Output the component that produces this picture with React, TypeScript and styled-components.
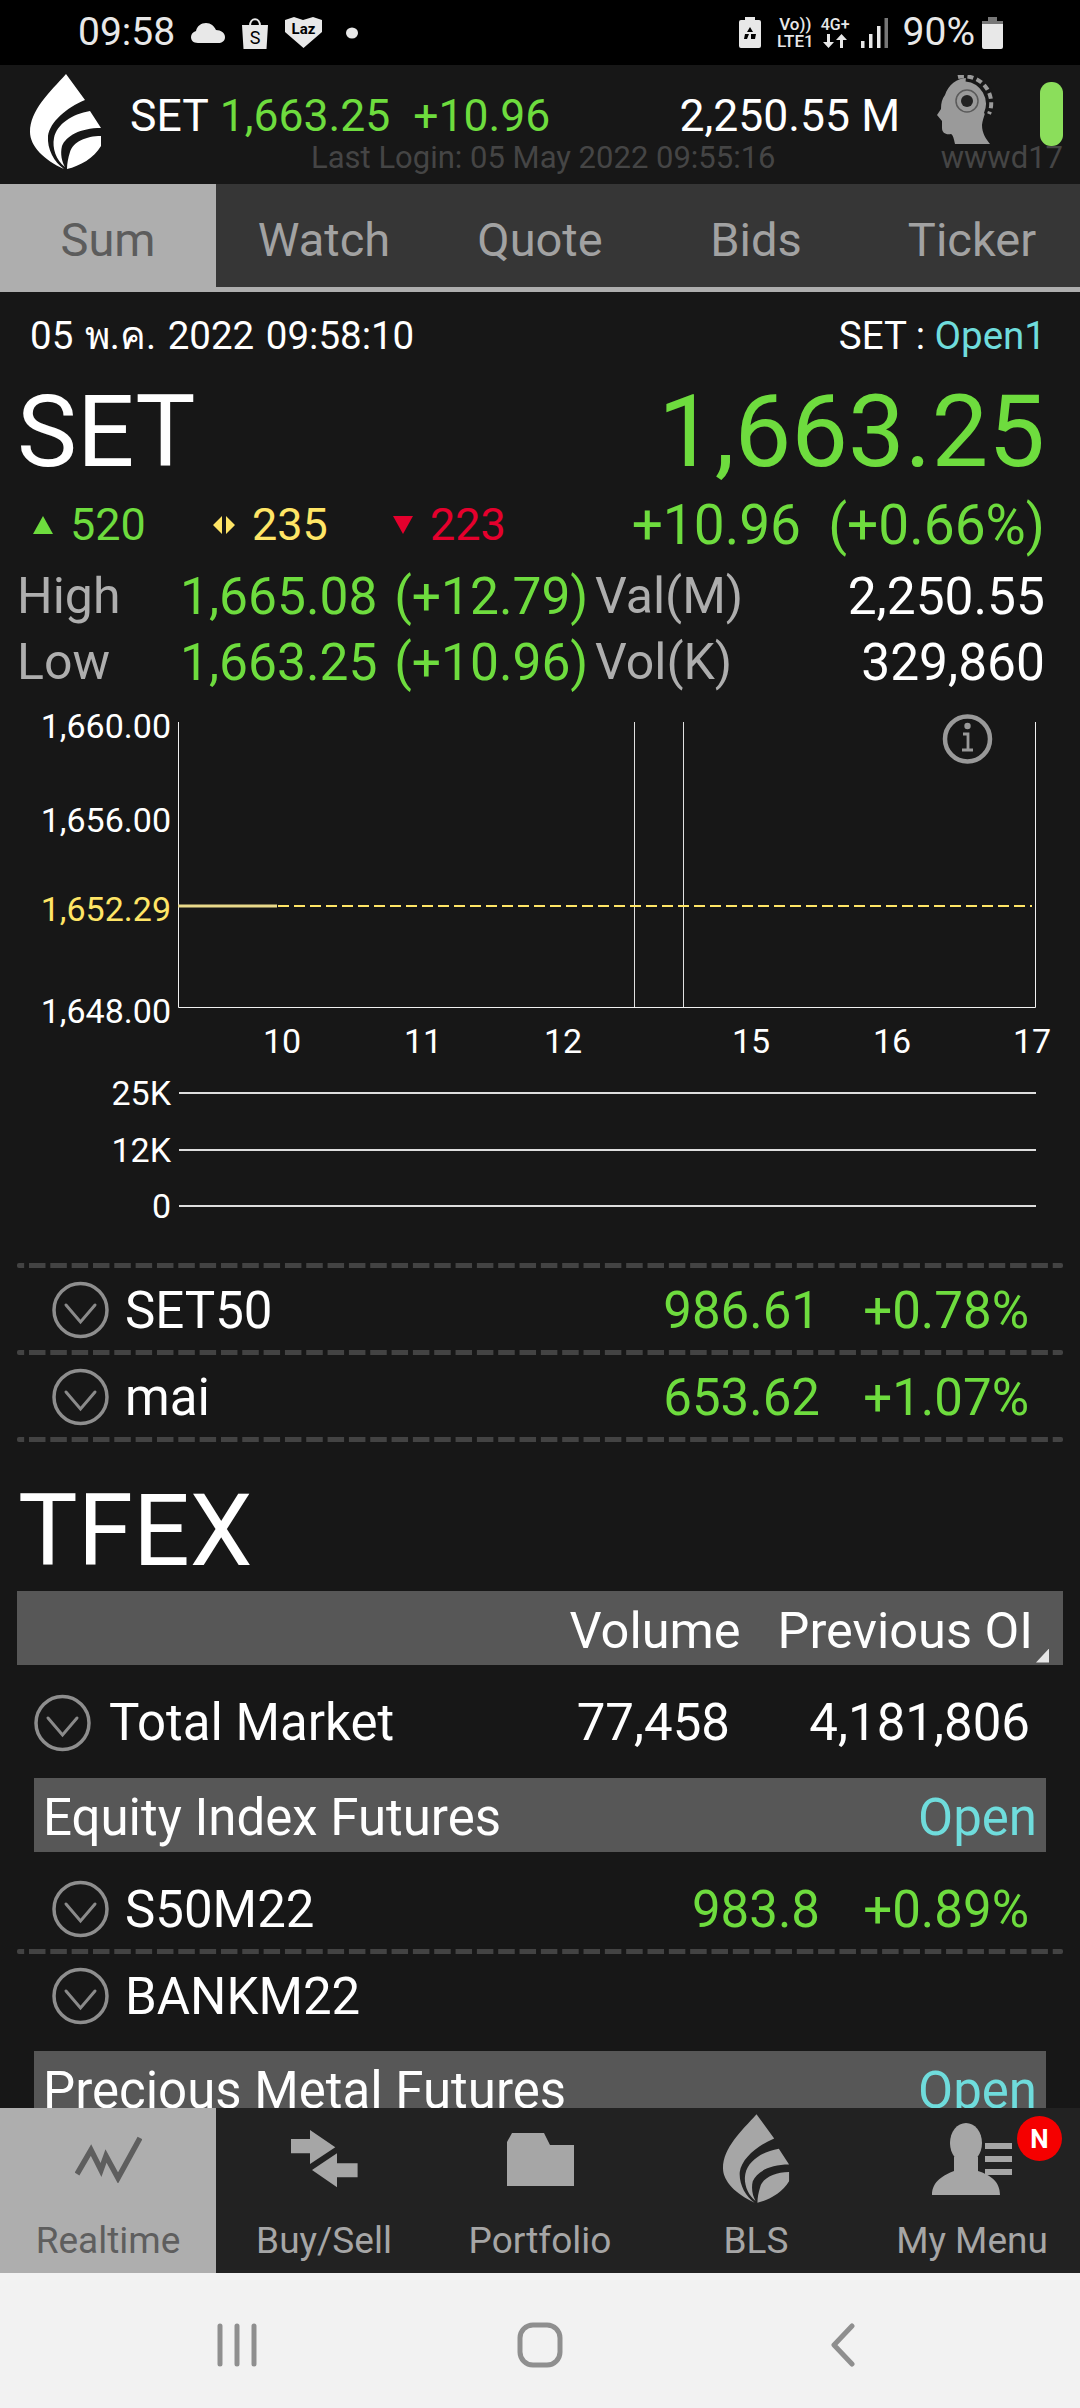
import React from 'react';
import styled, { createGlobalStyle } from 'styled-components';

// --- Palette ---

const GREEN = '#6edc3e';
const YELLOW = '#ffe566';
const RED = '#e5002d';
const CYAN = '#6fdcdc';
const PAGE = '#171717';

// --- Styled Components ---

const GlobalStyle = createGlobalStyle`
  html, body {
    margin: 0;
    padding: 0;
    background: ${PAGE};
  }
  * {
    box-sizing: border-box;
  }
`;

const Screen = styled.div`
  width: 1080px;
  height: 2408px;
  display: flex;
  flex-direction: column;
  overflow: hidden;
  background: ${PAGE};
  color: #ffffff;
  font-family: Roboto, "Noto Sans", sans-serif;
`;

const StatusBar = styled.div`
  height: 65px;
  flex: none;
  background: #000000;
  display: flex;
  align-items: center;
  padding: 0 77px 0 78px;
  color: #e8e8e8;
`;

const StatusText = styled.span`
  font-size: 39px;
  line-height: 67px;
`;

const StatusGroup = styled.div<{ $gap: number; $left?: number }>`
  display: flex;
  align-items: center;
  gap: ${(p) => p.$gap}px;
  margin-left: ${(p) => p.$left ?? 0}px;
`;

const StatusSpacer = styled.div`
  flex: 1;
`;

const NetworkStack = styled.div<{ $size: number; $left?: number }>`
  display: flex;
  flex-direction: column;
  align-items: center;
  gap: 1px;
  margin-left: ${(p) => p.$left ?? 0}px;
  font-size: ${(p) => p.$size}px;
  line-height: 16px;
  font-weight: 500;
  color: #e8e8e8;
`;

const Header = styled.header`
  height: 119px;
  flex: none;
  display: flex;
  background: ${PAGE};
  padding-left: 30px;
`;

const LogoSlot = styled.div`
  width: 72px;
  flex: none;
  padding-top: 9px;
`;

const QuoteColumn = styled.div`
  width: 806px;
  flex: none;
  margin-left: 28px;
  padding-top: 21px;
`;

const QuoteLine = styled.div`
  height: 60px;
  display: flex;
  align-items: center;
  justify-content: space-between;
  padding-right: 36px;
  font-size: 44.5px;
`;

const QuoteGroup = styled.div`
  display: flex;
  gap: 11px;
`;

const ColorText = styled.span<{ $color?: string; $left?: number }>`
  color: ${(p) => p.$color ?? 'inherit'};
  margin-left: ${(p) => p.$left ?? 0}px;
  white-space: nowrap;
`;

const LastLogin = styled.div`
  height: 26px;
  line-height: 26px;
  margin-top: -1px;
  padding-left: 181px;
  font-size: 31px;
  color: #454545;
  white-space: nowrap;
`;

const AccountColumn = styled.div`
  flex: none;
  width: 127px;
  display: flex;
  flex-direction: column;
  padding-top: 10px;
`;

const AccountIcons = styled.div`
  height: 70px;
  display: flex;
  justify-content: space-between;
`;

const StatusPill = styled.div`
  width: 23px;
  height: 64px;
  margin-top: 7px;
  border-radius: 11px;
  background: #8bde5b;
`;

const UserName = styled.div`
  height: 26px;
  line-height: 26px;
  text-align: right;
  font-size: 31px;
  color: #454545;
`;

const TabBar = styled.nav`
  height: 108px;
  flex: none;
  display: flex;
  background: #363636;
  border-bottom: 5px solid #aeaeae;
`;

const Tab = styled.div<{ $active?: boolean }>`
  width: 216px;
  display: flex;
  align-items: center;
  justify-content: center;
  padding-top: 8px;
  font-size: 47px;
  background: ${(p) => (p.$active ? '#aeaeae' : 'transparent')};
  color: ${(p) => (p.$active ? '#5c5c5c' : '#a2a2a2')};
`;

const Content = styled.main`
  flex: 1;
  min-height: 0;
  overflow: hidden;
`;

const DateRow = styled.div`
  height: 86px;
  display: flex;
  align-items: center;
  justify-content: space-between;
  padding: 0 34px 0 30px;
  font-size: 38.5px;
`;

const DateText = styled.span`
  word-spacing: 2px;
`;

const MarketLabel = styled.div`
  white-space: pre;
`;

const HeroRow = styled.div`
  height: 106px;
  display: flex;
  align-items: center;
  justify-content: space-between;
  padding: 0 35px 0 17px;
  font-size: 101px;
`;

const BreadthRow = styled.div`
  height: 79px;
  display: flex;
  align-items: center;
  justify-content: space-between;
  padding: 2px 35px 0 33px;
`;

const BreadthGroup = styled.div`
  display: flex;
  align-items: center;
`;

const BreadthItem = styled.div<{ $width: number; $color: string }>`
  width: ${(p) => p.$width}px;
  display: flex;
  align-items: center;
  gap: 17px;
  font-size: 45px;
  color: ${(p) => p.$color};
`;

const DayChange = styled.div`
  font-size: 55px;
  color: ${GREEN};
  white-space: pre;
`;

const RangeRow = styled.div`
  height: 66px;
  display: flex;
  align-items: center;
  padding: 0 35px 0 17px;
  font-size: 51.5px;
  white-space: pre;
`;

const RangeLabel = styled.span<{ $width: number }>`
  width: ${(p) => p.$width}px;
  flex: none;
  font-size: 50px;
  color: #aeaeae;
`;

const RangeValue = styled.span`
  width: 415px;
  flex: none;
  word-spacing: 4px;
  color: ${GREEN};
`;

const RangeTotal = styled.span`
  flex: 1;
  text-align: right;
`;

const PriceChart = styled.div`
  position: relative;
  height: 370px;
  padding: 27px 0 0 178px;
`;

const AxisLabel = styled.span<{ $y: number; $color?: string }>`
  position: absolute;
  right: 909px;
  top: ${(p) => p.$y - 20}px;
  font-size: 34px;
  line-height: 40px;
  color: ${(p) => p.$color ?? '#ffffff'};
`;

const TimeLabel = styled.span<{ $x: number }>`
  position: absolute;
  top: 326px;
  left: ${(p) => p.$x - 30}px;
  width: 60px;
  text-align: center;
  font-size: 34px;
  line-height: 40px;
`;

const VolumeChart = styled.section`
  margin-bottom: 28px;
`;

const VolumeRow = styled.div`
  height: 56.5px;
  display: flex;
  align-items: center;
  gap: 8px;
  font-size: 34px;
`;

const VolumeLabel = styled.span`
  width: 171px;
  text-align: right;
`;

const VolumeLine = styled.div`
  width: 857px;
  height: 2px;
  background: #dedede;
`;

const Divider = styled.div`
  height: 5px;
  margin: 0 17px;
  background-image: linear-gradient(90deg, #434343 16px, transparent 16px);
  background-size: 21.33px 5px;
  background-position: 12px 0;
  border-radius: 2px;
`;

const SymbolRow = styled.div<{ $top?: number }>`
  height: 82px;
  margin-top: ${(p) => p.$top ?? 0}px;
  display: flex;
  align-items: center;
  padding: 3px 51px 0 52px;
  font-size: 51px;
`;

const SymbolName = styled.span`
  margin-left: 16px;
  flex: 1;
`;

const TotalName = styled(SymbolName)`
  margin-left: 18px;
`;

const PriceCell = styled.span`
  color: ${GREEN};
`;

const PercentCell = styled.span`
  width: 209px;
  text-align: right;
  color: ${GREEN};
`;

const SectionTitle = styled.h2`
  margin: 28px 0 0;
  height: 121px;
  line-height: 121px;
  padding-left: 18px;
  font-size: 100px;
  font-weight: 400;
`;

const TableHead = styled.div`
  position: relative;
  height: 74px;
  margin: 0 17px;
  display: flex;
  align-items: center;
  justify-content: flex-end;
  padding: 6px 30px 0 0;
  background: #575757;
  font-size: 50.5px;
`;

const CornerMark = styled.span`
  position: absolute;
  right: 14px;
  bottom: 2px;
  width: 13px;
  height: 14px;
  background: #e6e6e6;
  clip-path: polygon(100% 0, 100% 100%, 0 100%);
`;

const HeadVolume = styled.span`
  margin-right: 37px;
`;

const TotalRow = styled.div`
  height: 113px;
  display: flex;
  align-items: center;
  padding: 3px 50px 0 34px;
  font-size: 51px;
`;

const TotalCell = styled.span`
  width: 300px;
  text-align: right;
`;

const GroupBar = styled.div<{ $top?: number }>`
  height: 74px;
  flex: none;
  margin: ${(p) => p.$top ?? 0}px 34px 0;
  display: flex;
  align-items: center;
  justify-content: space-between;
  padding: 5px 9px 0 9px;
  background: #575757;
  font-size: 51px;
`;

const GroupState = styled.span`
  color: ${CYAN};
`;

const BottomNav = styled.nav`
  height: 165px;
  flex: none;
  display: flex;
  background: #222222;
`;

const NavItem = styled.div<{ $active?: boolean }>`
  position: relative;
  width: 216px;
  display: flex;
  flex-direction: column;
  align-items: center;
  background: ${(p) => (p.$active ? '#aeaeae' : 'transparent')};
  color: ${(p) => (p.$active ? '#5e5e5e' : '#a6a6a6')};
`;

const NavIconSlot = styled.div`
  height: 102px;
  display: flex;
  align-items: center;
  justify-content: center;
`;

const NavLabel = styled.span`
  font-size: 37px;
  line-height: 54px;
  margin-top: 4px;
`;

const NewBadge = styled.span`
  position: absolute;
  top: 8px;
  left: 153px;
  width: 45px;
  height: 45px;
  border-radius: 50%;
  background: #f50000;
  color: #ffffff;
  display: flex;
  align-items: center;
  justify-content: center;
  font-size: 26px;
  font-weight: 700;
`;

const SystemBar = styled.div`
  height: 135px;
  flex: none;
  background: #f2f2f2;
  display: grid;
  grid-template-columns: repeat(3, 303px);
  justify-content: center;
  align-items: center;
  justify-items: center;
  padding-top: 9px;
`;

const PlotSvg = styled.svg`
  display: block;
  overflow: visible;
`;

// --- Icons ---

const Flame = ({ fill, width, height }: { fill: string; width: number; height: number }) => (
  <svg width={width} height={height} viewBox="0 0 72 96" fill={fill}>
    <path d="M36 0 L55 26 C36 34 20 48 18 62 C17 75 24 88 34 95 C14 86 0 72 0 58 C0 36 20 18 36 0 Z" />
    <path d="M60 37 L71 54 C50 54 36 62 32 72 C30 80 32 88 35 93 C26 86 22 74 24 64 C27 50 42 40 60 37 Z" />
    <path d="M71 62 C56 62 43 68 40 78 C38 84 37 90 37 95 C50 92 64 84 71 72 Z" />
  </svg>
);

const Chevron = () => (
  <svg width="57" height="58" viewBox="0 0 57 58" fill="none">
    <circle cx="28.5" cy="29" r="26.5" stroke="#8e8e8e" strokeWidth="3.5" />
    <path d="M14 24 L28.5 41 L43 24" stroke="#8a8a8a" strokeWidth="3" strokeLinecap="round" />
  </svg>
);

const HeadIcon = () => (
  <svg width="60" height="70" viewBox="0 0 60 70">
    <path
      d="M9 20 C12 10 21 3 31 3 C42 3 51 12 51 26 C51 36 47 42 46 50 C46 58 50 64 54 69 L19 69 C18 64 17 60 15 59 C10 60 6 58 6 53 L6 46 L1 40 L5 34 C5 28 6 24 9 20 Z"
      fill="#9a9a9a"
    />
    <path d="M30 2 A27 27 0 0 1 52 40" fill="none" stroke={PAGE} strokeWidth="9" />
    <path
      d="M22 2 A27 27 0 0 1 53 39"
      fill="none"
      stroke="#9a9a9a"
      strokeWidth="4"
      strokeDasharray="6 3.5"
    />
    <circle cx="31" cy="26" r="11" fill="none" stroke="#5a5a5a" strokeWidth="1.5" />
    <circle cx="31" cy="26" r="6" fill="#222222" />
  </svg>
);

const RealtimeIcon = () => (
  <svg width="67" height="48" viewBox="0 0 67 48" fill="none">
    <path d="M2 39 L16 15 L26 35 L31 21 L43 43 L65 3" stroke="currentColor" strokeWidth="5.5" />
  </svg>
);

const TradeIcon = () => (
  <svg width="67" height="58" viewBox="0 0 67 58" fill="currentColor">
    <path d="M0 9 H19 V0 L44.3 17.3 L19 34 V23.3 H0 Z" />
    <path d="M66.6 33.3 H46 V23.3 L21 40 L46 57.3 V47.3 H66.6 Z" />
  </svg>
);

const FolderIcon = () => (
  <svg width="67" height="53" viewBox="0 0 67 53" fill="currentColor">
    <path d="M0 53 V9 L5 0 H37 L43 12 H67 V53 Z" />
  </svg>
);

const PersonIcon = () => (
  <svg width="80" height="72" viewBox="0 0 80 72" fill="currentColor">
    <ellipse cx="34" cy="20" rx="16" ry="20" />
    <path d="M0 72 C0 58 12 52 22 48 L22 34 H46 V48 C58 52 68 58 68 72 Z" />
    <rect x="53" y="20" width="27" height="6" />
    <rect x="53" y="33" width="27" height="6" />
    <rect x="53" y="46" width="27" height="6" />
  </svg>
);

const PriceChartPlot = () => (
  <PlotSvg width="860" height="288" viewBox="0 0 860 288" fill="none">
    <path d="M0.5 0 V285.5 H857.5 V0" stroke="#f0f0f0" strokeWidth="1" />
    <path d="M456.5 0 V285 M505.5 0 V285" stroke="#e0e0e0" strokeWidth="1" />
    <path d="M100 184 H854" stroke={YELLOW} strokeWidth="2" strokeDasharray="11 5" />
    <path d="M0 184 H99" stroke="#e9d98a" strokeWidth="3" />
    <circle cx="789.5" cy="17" r="22.5" stroke="#999999" strokeWidth="4.5" />
    <circle cx="789.5" cy="4" r="3.2" fill="#999999" />
    <path d="M785 12 H790 V27 M784 28 H795" stroke="#999999" strokeWidth="2.8" />
  </PlotSvg>
);

// --- Data ---

const TABS = ['Sum', 'Watch', 'Quote', 'Bids', 'Ticker'];
const AXIS = [
  { y: 31, text: '1,660.00' },
  { y: 125, text: '1,656.00' },
  { y: 214, text: '1,652.29', color: YELLOW },
  { y: 316, text: '1,648.00' },
];
const TIMES = [
  { x: 282, text: '10' },
  { x: 423, text: '11' },
  { x: 563, text: '12' },
  { x: 751, text: '15' },
  { x: 892, text: '16' },
  { x: 1032, text: '17' },
];

// --- Component ---

const App = () => {
  return (
    <Screen>
      <GlobalStyle />

      <StatusBar>
        <StatusText>09:58</StatusText>
        <StatusGroup $gap={16} $left={16}>
          <svg width="34" height="20" viewBox="0 0 34 20" fill="#e8e8e8">
            <path d="M7 20 C2 20 0 17 0 14 C0 11 2 9 5 8 C6 3 10 0 15 0 C20 0 23 3 25 7 C30 7 34 10 34 14 C34 18 31 20 27 20 Z" />
          </svg>
          <svg width="28" height="32" viewBox="0 0 28 32">
            <path d="M1 8 H27 L25.5 32 H2.5 Z" fill="#e8e8e8" />
            <path d="M9 9 C9 0 19 0 19 9" fill="none" stroke="#e8e8e8" strokeWidth="2" />
            <text x="14" y="27" textAnchor="middle" fontSize="18" fill="#000000" fontFamily="Roboto">S</text>
          </svg>
          <svg width="37" height="31" viewBox="0 0 37 31">
            <path d="M0 3 L9 0 L18 3 L28 0 L37 3 V15 L18.5 31 L0 15 Z" fill="#e8e8e8" />
            <text x="18.5" y="17" textAnchor="middle" fontSize="15" fontWeight="700" fill="#000000" fontFamily="Roboto">Laz</text>
          </svg>
          <svg width="14" height="12" viewBox="0 0 14 12" style={{ marginLeft: 7 }}>
            <ellipse cx="7" cy="6" rx="6" ry="5.5" fill="#e8e8e8" />
          </svg>
        </StatusGroup>
        <StatusSpacer />
        <StatusGroup $gap={15}>
          <svg width="22" height="31" viewBox="0 0 22 31">
            <path d="M6 0 H16 V3 H20 Q22 3 22 5 V29 Q22 31 20 31 H2 Q0 31 0 29 V5 Q0 3 2 3 H6 Z" fill="#e8e8e8" />
            <path d="M11 10 L14 15 H8 Z M6 17 H10 L8 22 H5 Z M12 17 H17 L16 22 H12 Z" fill="#000000" />
          </svg>
          <NetworkStack $size={17} $left={1}>
            <span>Vo))</span>
            <span>LTE1</span>
          </NetworkStack>
          <NetworkStack $size={16} $left={-8}>
            <span>4G+</span>
            <svg width="26" height="14" viewBox="0 0 26 14" fill="#e8e8e8">
              <path d="M5 0 H8 V8 H12 L6.5 14 L1 8 H5 Z M18 14 H21 V6 H25 L19.5 0 L14 6 H18 Z" />
            </svg>
          </NetworkStack>
          <svg width="27" height="30" viewBox="0 0 27 30" style={{ marginLeft: -4 }}>
            <rect x="0" y="23" width="3.5" height="7" fill="#e8e8e8" />
            <rect x="8" y="16" width="3.5" height="14" fill="#e8e8e8" />
            <rect x="16" y="8" width="3.5" height="22" fill="#e8e8e8" />
            <rect x="23.5" y="0" width="3.5" height="30" fill="#777777" />
          </svg>
          <StatusText>90%</StatusText>
          <svg width="21" height="32" viewBox="0 0 21 32" style={{ marginLeft: -8 }}>
            <rect x="6" y="0" width="9" height="4" fill="#777777" />
            <rect x="0" y="4" width="21" height="4" fill="#777777" />
            <path d="M0 7 H21 V30 Q21 32 19 32 H2 Q0 32 0 30 Z" fill="#e8e8e8" />
          </svg>
        </StatusGroup>
      </StatusBar>

      <Header>
        <LogoSlot>
          <Flame fill="#ffffff" width={72} height={96} />
        </LogoSlot>
        <QuoteColumn>
          <QuoteLine>
            <QuoteGroup>
              <span>SET</span>
              <ColorText $color={GREEN}>1,663.25</ColorText>
              <ColorText $color={GREEN} $left={12}>+10.96</ColorText>
            </QuoteGroup>
            <span>2,250.55 M</span>
          </QuoteLine>
          <LastLogin>Last Login: 05 May 2022 09:55:16</LastLogin>
        </QuoteColumn>
        <AccountColumn>
          <AccountIcons>
            <HeadIcon />
            <StatusPill />
          </AccountIcons>
          <UserName>wwwd17</UserName>
        </AccountColumn>
      </Header>

      <TabBar>
        {TABS.map((tab, i) => (
          <Tab key={tab} $active={i === 0}>{tab}</Tab>
        ))}
      </TabBar>

      <Content>
        <DateRow>
          <DateText>05 พ.ค. 2022 09:58:10</DateText>
          <MarketLabel>SET : <ColorText $color={CYAN}>Open1</ColorText></MarketLabel>
        </DateRow>

        <HeroRow>
          <span>SET</span>
          <ColorText $color={GREEN}>1,663.25</ColorText>
        </HeroRow>

        <BreadthRow>
          <BreadthGroup>
            <BreadthItem $width={180} $color={GREEN}>
              <svg width="20" height="18" viewBox="0 0 20 18" fill={GREEN}><path d="M10 0 L20 18 H0 Z" /></svg>
              520
            </BreadthItem>
            <BreadthItem $width={180} $color={YELLOW}>
              <svg width="22" height="18" viewBox="0 0 22 18" fill={YELLOW}><path d="M9 0 V18 L0 9 Z M13 0 L22 9 L13 18 Z" /></svg>
              235
            </BreadthItem>
            <BreadthItem $width={120} $color={RED}>
              <svg width="20" height="18" viewBox="0 0 20 18" fill={RED}><path d="M0 0 H20 L10 18 Z" /></svg>
              223
            </BreadthItem>
          </BreadthGroup>
          <DayChange>+10.96  (+0.66%)</DayChange>
        </BreadthRow>

        <RangeRow>
          <RangeLabel $width={163}>High</RangeLabel>
          <RangeValue>1,665.08 (+12.79)</RangeValue>
          <RangeLabel $width={200}>Val(M)</RangeLabel>
          <RangeTotal>2,250.55</RangeTotal>
        </RangeRow>
        <RangeRow>
          <RangeLabel $width={163}>Low</RangeLabel>
          <RangeValue>1,663.25 (+10.96)</RangeValue>
          <RangeLabel $width={200}>Vol(K)</RangeLabel>
          <RangeTotal>329,860</RangeTotal>
        </RangeRow>

        <PriceChart>
          <PriceChartPlot />
          {AXIS.map((a) => (
            <AxisLabel key={a.text} $y={a.y} $color={a.color}>{a.text}</AxisLabel>
          ))}
          {TIMES.map((t) => (
            <TimeLabel key={t.text} $x={t.x}>{t.text}</TimeLabel>
          ))}
        </PriceChart>

        <VolumeChart>
          <VolumeRow><VolumeLabel>25K</VolumeLabel><VolumeLine /></VolumeRow>
          <VolumeRow><VolumeLabel>12K</VolumeLabel><VolumeLine /></VolumeRow>
          <VolumeRow><VolumeLabel>0</VolumeLabel><VolumeLine /></VolumeRow>
        </VolumeChart>

        <Divider />
        <SymbolRow>
          <Chevron />
          <SymbolName>SET50</SymbolName>
          <PriceCell>986.61</PriceCell>
          <PercentCell>+0.78%</PercentCell>
        </SymbolRow>
        <Divider />
        <SymbolRow>
          <Chevron />
          <SymbolName>mai</SymbolName>
          <PriceCell>653.62</PriceCell>
          <PercentCell>+1.07%</PercentCell>
        </SymbolRow>
        <Divider />

        <SectionTitle>TFEX</SectionTitle>
        <TableHead>
          <HeadVolume>Volume</HeadVolume>
          <span>Previous OI</span>
          <CornerMark />
        </TableHead>
        <TotalRow>
          <Chevron />
          <TotalName>Total Market</TotalName>
          <span>77,458</span>
          <TotalCell>4,181,806</TotalCell>
        </TotalRow>

        <GroupBar>
          <span>Equity Index Futures</span>
          <GroupState>Open</GroupState>
        </GroupBar>
        <SymbolRow $top={15}>
          <Chevron />
          <SymbolName>S50M22</SymbolName>
          <PriceCell>983.8</PriceCell>
          <PercentCell>+0.89%</PercentCell>
        </SymbolRow>
        <Divider />
        <SymbolRow>
          <Chevron />
          <SymbolName>BANKM22</SymbolName>
        </SymbolRow>
        <GroupBar $top={15}>
          <span>Precious Metal Futures</span>
          <GroupState>Open</GroupState>
        </GroupBar>
      </Content>

      <BottomNav>
        <NavItem $active>
          <NavIconSlot><RealtimeIcon /></NavIconSlot>
          <NavLabel>Realtime</NavLabel>
        </NavItem>
        <NavItem>
          <NavIconSlot><TradeIcon /></NavIconSlot>
          <NavLabel>Buy/Sell</NavLabel>
        </NavItem>
        <NavItem>
          <NavIconSlot><FolderIcon /></NavIconSlot>
          <NavLabel>Portfolio</NavLabel>
        </NavItem>
        <NavItem>
          <NavIconSlot><Flame fill="#a6a6a6" width={67} height={90} /></NavIconSlot>
          <NavLabel>BLS</NavLabel>
        </NavItem>
        <NavItem>
          <NavIconSlot><PersonIcon /></NavIconSlot>
          <NavLabel>My Menu</NavLabel>
          <NewBadge>N</NewBadge>
        </NavItem>
      </BottomNav>

      <SystemBar>
        <svg width="40" height="44" viewBox="0 0 40 44" fill="none" stroke="#8f8f8f" strokeWidth="5" strokeLinecap="round">
          <path d="M3 3 V41 M20 3 V41 M37 3 V41" />
        </svg>
        <svg width="46" height="46" viewBox="0 0 46 46" fill="none" stroke="#8f8f8f" strokeWidth="5">
          <rect x="3" y="3" width="40" height="40" rx="13" />
        </svg>
        <svg width="24" height="44" viewBox="0 0 24 44" fill="none" stroke="#8f8f8f" strokeWidth="5" strokeLinecap="round" strokeLinejoin="round">
          <path d="M21 3 L3 22 L21 41" />
        </svg>
      </SystemBar>
    </Screen>
  );
};

export default App;
